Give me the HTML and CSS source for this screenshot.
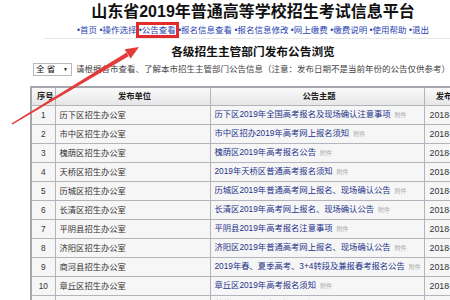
FILE: index.html
```html
<!DOCTYPE html>
<html lang="zh-CN">
<head>
    <meta charset="UTF-8">
    <title>山东省2019年普通高等学校招生考试信息平台</title>
    <link rel="stylesheet" href="styles.css">
</head>
<body>
    <div class="page">
        <h1 class="title">山东省2019年普通高等学校招生考试信息平台</h1>
        <div class="nav">
            <a href="#">•首页</a>
            <a href="#">•操作选择</a>
            <a href="#" class="current">•公告查看</a>
            <a href="#">•报名信息查看</a>
            <a href="#">•报名信息修改</a>
            <a href="#">•网上缴费</a>
            <a href="#">•缴费说明</a>
            <a href="#">•使用帮助</a>
            <a href="#">•退出</a>
        </div>
        <h2 class="subtitle">各级招生主管部门发布公告浏览</h2>
        <div class="filter">
            <div class="select">全 省 <span class="caret">▼</span></div>
            <span class="hint">请根据各市查看、了解本市招生主管部门公告信息（注意：发布日期不是当前年份的公告仅供参考）</span>
        </div>
        <table class="notice-table">
            <colgroup>
                <col class="c-no">
                <col class="c-unit">
                <col class="c-title">
                <col class="c-date">
            </colgroup>
            <thead>
                <tr>
                    <th>序号</th>
                    <th>发布单位</th>
                    <th>公告主题</th>
                    <th>发布日期</th>
                </tr>
            </thead>
            <tbody>
                <tr><td class="no">1</td><td>历下区招生办公室</td><td><a href="#">历下区2019年全国高考报名及现场确认注意事项</a><span class="tag">附件</span></td><td class="date">2018-10-29</td></tr>
                <tr><td class="no">2</td><td>市中区招生办公室</td><td><a href="#">市中区招办2019年高考网上报名须知</a><span class="tag">附件</span></td><td class="date">2018-10-29</td></tr>
                <tr><td class="no">3</td><td>槐荫区招生办公室</td><td><a href="#">槐荫区2019年高考报名公告</a><span class="tag">附件</span></td><td class="date">2018-10-29</td></tr>
                <tr><td class="no">4</td><td>天桥区招生办公室</td><td><a href="#">2019年天桥区普通高考报名须知</a><span class="tag">附件</span></td><td class="date">2018-10-29</td></tr>
                <tr><td class="no">5</td><td>历城区招生办公室</td><td><a href="#">历城区2019年普通高考网上报名、现场确认公告</a><span class="tag">附件</span></td><td class="date">2018-10-29</td></tr>
                <tr><td class="no">6</td><td>长清区招生办公室</td><td><a href="#">长清区2019年高考网上报名、现场确认公告</a><span class="tag">附件</span></td><td class="date">2018-10-29</td></tr>
                <tr><td class="no">7</td><td>平阴县招生办公室</td><td><a href="#">平阴县2019年高考报名注意事项</a><span class="tag">附件</span></td><td class="date">2018-10-29</td></tr>
                <tr><td class="no">8</td><td>济阳区招生办公室</td><td><a href="#">济阳区2019年普通高考网上报名、现场确认公告</a><span class="tag">附件</span></td><td class="date">2018-10-29</td></tr>
                <tr><td class="no">9</td><td>商河县招生办公室</td><td><a href="#">2019年春、夏季高考、3+4转段及兼报春考报名公告</a><span class="tag">附件</span></td><td class="date">2018-10-29</td></tr>
                <tr><td class="no">10</td><td>章丘区招生办公室</td><td><a href="#">章丘区2019年高考报名须知</a><span class="tag">附件</span></td><td class="date">2018-10-29</td></tr>
                <tr><td class="no">11</td><td>莱芜区招生办公室</td><td><a href="#">莱芜区2019年高考报名须知</a><span class="tag">附件</span></td><td class="date">2018-10-29</td></tr>
            </tbody>
        </table>
    </div>
    <svg class="arrow" width="450" height="300" viewBox="0 0 450 300">
        <polygon points="11.5,123.6 12.5,124.4 128.6,56.2 126.6,52.6" fill="#e53a3a"/>
        <polygon points="139,47 124.6,49.2 130.6,58.6" fill="#e53a3a"/>
    </svg>
</body>
</html>
```

FILE: styles.css
```css
html, body {
    margin: 0;
    padding: 0;
    background: #fff;
    overflow: hidden;
}
body {
    width: 450px;
    height: 300px;
    position: relative;
    font-family: "Liberation Sans", "Noto Sans CJK SC", sans-serif;
    color: #333;
}
.page {
    width: 446px;
    margin-left: 30px;
}
.title {
    margin: 0;
    padding-top: 2px;
    font-size: 16px;
    line-height: 20px;
    font-weight: bold;
    color: #111;
    text-align: center;
    white-space: nowrap;
}
.nav {
    margin: 1px 14px 0;
    padding-bottom: 1px;
    border-bottom: 1px solid #e8e8e8;
    font-size: 8.5px;
    line-height: 14px;
    text-align: center;
    white-space: nowrap;
}
.nav a {
    color: #2a3fb0;
    text-decoration: none;
}
.nav a.current {
    outline: 3px solid #e22b2b;
    outline-offset: 0;
}
.subtitle {
    margin: 5px 0 0;
    font-size: 11.7px;
    line-height: 16px;
    font-weight: bold;
    color: #111;
    text-align: center;
}
.filter {
    margin-top: 3px;
    margin-left: 3px;
    display: flex;
    align-items: center;
    gap: 4px;
    white-space: nowrap;
}
.select {
    width: 35px;
    height: 11px;
    border: 1px solid #b8b8b8;
    font-size: 8.5px;
    line-height: 11px;
    color: #111;
    padding-left: 2px;
    position: relative;
}
.caret {
    position: absolute;
    right: 3px;
    top: 0;
    font-size: 5px;
}
.hint {
    font-size: 8.5px;
    line-height: 13px;
    color: #444;
}
.notice-table {
    margin-top: 10px;
    width: 446px;
    table-layout: fixed;
    border-collapse: collapse;
    border: 2px solid #a6a6ae;
    font-size: 8.3px;
}
.c-no { width: 24px; }
.c-unit { width: 155px; }
.c-title { width: 214px; }
.c-date { width: 53px; }
.notice-table th,
.notice-table td {
    border: 1px solid #b4b4bc;
    padding: 0 0 0 4px;
    height: 17px;
    line-height: 17px;
    white-space: nowrap;
    overflow: hidden;
    text-align: left;
}
.notice-table th {
    height: 17px;
    text-align: center;
    font-weight: bold;
    color: #222;
    background: linear-gradient(#fafafa, #e6e6e6);
}
.notice-table td {
    background: #f6f6f6;
}
.notice-table td.no {
    text-align: center;
    padding: 0;
}
.notice-table td a {
    color: #23318a;
    text-decoration: none;
}
.notice-table td.date {
    padding-left: 5px;
    font-size: 8.8px;
}
.tag {
    margin-left: 4px;
    font-size: 6px;
    color: #aaa;
}
.arrow {
    position: absolute;
    left: 0;
    top: 0;
    pointer-events: none;
}
```
